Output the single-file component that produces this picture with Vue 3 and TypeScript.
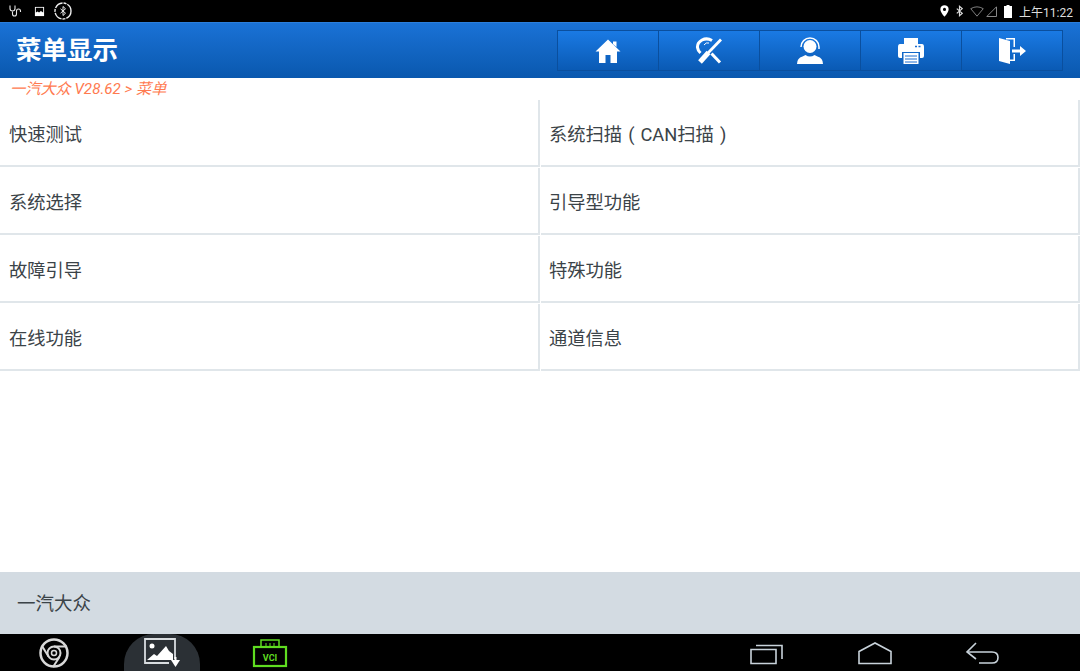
<template>
  <div class="screen">
    <div class="status-bar">
      <div class="status-left">
        <svg width="14" height="12" viewBox="0 0 14 12" fill="none" stroke="#e8e8e8" stroke-width="1.1"><path d="M1 .5v3a2.500 2.500 0 0 0 5 0v-3" /><path d="M3.500 6.500V9a2 2 0 0 0 4 0V6a2 2 0 0 1 4 0v1" /></svg>
        <svg width="11" height="11" viewBox="0 0 12 12"><path d="M1 1h10v10H1z" fill="#fff" /><path d="M2 2h8v5L7.500 5.500 5.500 7 4 6 2 7z" fill="#000" /></svg>
        <svg class="gap-circle" width="18" height="18" viewBox="0 0 18 18" fill="none" stroke="#eee"><circle cx="9" cy="9" r="8" stroke-width="1.400" stroke-dasharray="9 1 3 1" /><path d="M6.500 6.800l5 4.400L9 13.500v-9l2.500 2.300-5 4.400" stroke-width="1" /></svg>
      </div>
      <div class="status-right">
        <svg width="9" height="12" viewBox="0 0 10 13"><path fill-rule="evenodd" d="M5 0a4.600 4.600 0 0 1 4.600 4.600C9.600 8 5 13 5 13S.4 8 .4 4.600A4.600 4.600 0 0 1 5 0zm0 3a1.700 1.700 0 1 0 0 3.400A1.700 1.700 0 0 0 5 3z" fill="#fff" /></svg>
        <svg class="gap-bt" width="7" height="12" viewBox="0 0 9 12" fill="none" stroke="#ddd" stroke-width="1.500"><path d="M1 3l7 6-3.500 3V0L8 3 1 9" /></svg>
        <svg class="gap-wifi" width="14" height="11" viewBox="0 0 15 11" fill="none" stroke="#888"><path d="M.8 2.500Q7.500-1.500 14.200 2.500L7.500 10.500z" /></svg>
        <svg class="gap-signal" width="11" height="11" viewBox="0 0 11 11" fill="none" stroke="#888"><path d="M10.500.8v9.700H.8z" /></svg>
        <svg class="gap-battery" width="8" height="13" viewBox="0 0 8 13"><path d="M2.500 0h3v1H8v12H0V1h2.500z" fill="#fff" /></svg>
        <span class="clock">上午11:22</span>
      </div>
    </div>

    <header class="title-bar">
      <h1>菜单显示</h1>
      <div class="toolbar">
        <button>
          <svg width="26" height="26" viewBox="0 0 26 26"><path d="M13 1.500L25.500 13.500H22V25H15.500V17h-5v8H4V13.500H.5L13 1.500zM18 3.500h3.500V9L18 6z" fill="#fff" /></svg>
        </button>
        <button>
          <svg width="28" height="28" viewBox="0 0 28 28" fill="none" stroke="#fff"><path d="M17 3.500Q12 .5 7 3 2 6 2.500 10.500q.3 3 3 5.500" stroke-width="3" /><path d="M9 8q2-3 5-2" stroke-width="1" /><path d="M26 2.500L13 16" stroke-width="2.800" /><path d="M13.500 15.500L5 25" stroke-width="5" /><path d="M16.500 16.500l8.500 9" stroke-width="3" /></svg>
        </button>
        <button>
          <svg width="28" height="28" viewBox="0 0 28 28"><circle cx="14" cy="9.500" r="6.500" fill="#fff" /><path d="M5 10a9 9 0 0 1 18 0v2" fill="none" stroke="#fff" stroke-width="1.500" /><path d="M1 27q0-6 5.500-7.500l3-1.500q4.500 3 9 0l3 1.500Q27 21 27 27z" fill="#fff" /></svg>
        </button>
        <button>
          <svg width="28" height="28" viewBox="0 0 28 28"><path d="M7 1h14v6H7z" fill="#fff" /><path d="M3 7h22q2 0 2 3v9q0 2-2 2h-2v-6H5v6H3q-2 0-2-2v-9q0-3 2-3z" fill="#fff" /><path d="M6.500 16h15v11h-15z" fill="#fff" /><path d="M8 19h12M8 22h12M8 25h12" stroke="#1a6cd0" stroke-width="1" /><path d="M18 9.500h2M21.500 9.500h2" stroke="#1a6cd0" stroke-width="1.400" /></svg>
        </button>
        <button>
          <svg width="28" height="28" viewBox="0 0 28 28"><path d="M1 1h16v9h-1.500V2.500H8V1z" fill="#fff" /><path d="M1 1l11 3v23L1 24z" fill="#fff" /><path d="M15.500 17H17v7H12v-1.500h3.500z" fill="#fff" /><path d="M14 12.500h8V9l6 5-6 5v-3.500h-8z" fill="#fff" /></svg>
        </button>
      </div>
    </header>

    <div class="crumb">一汽大众 V28.62 &gt; 菜单</div>

    <main class="menu">
      <div v-for="item in items" :key="item" class="menu-item">{{ item }}</div>
    </main>

    <div class="brand-bar">一汽大众</div>

    <nav class="nav-bar">
      <svg class="nav-chrome" width="30" height="30" viewBox="0 0 30 30" fill="none" stroke="#d8d8d8"><circle cx="15" cy="15" r="13.500" stroke-width="2.500" /><circle cx="15" cy="15" r="6.500" stroke-width="2" /><circle cx="15" cy="15" r="2.500" stroke-width="1.500" /><path d="M15 8.500h13M9.500 18.500L3 8M20.500 19L14 29" stroke-width="2" /></svg>
      <div class="nav-pill">
        <svg width="40" height="34" viewBox="0 0 40 34" fill="none"><path d="M33 23V3H3v24h24" stroke="#d8dcdf" stroke-width="1.800" /><circle cx="10" cy="10" r="2.500" fill="#fff" /><path d="M5 24l7-6 3 2 9-10 3 5 4 3v6z" fill="#fff" /><path d="M29 24h9l-4.500 7z" fill="#fff" /><path d="M33.500 21v4" stroke="#fff" stroke-width="2" /></svg>
      </div>
      <div class="nav-vci">
        <svg width="36" height="30" viewBox="0 0 36 30" fill="none" stroke="#5fdc20"><path d="M9 9V2h18v7" stroke-width="1.500" /><path d="M14 5v4M18 5v4M22 5v4" stroke-width="1" /><rect x="2" y="9" width="32" height="19" stroke-width="2.200" /><text x="18" y="22.500" text-anchor="middle" class="vci-text">VCI</text></svg>
      </div>
      <div class="nav-spacer"></div>
      <svg class="nav-recent" width="36" height="24" viewBox="0 0 36 24" fill="none" stroke="#c8d2da" stroke-width="1.600"><path d="M2 8.500h25v14H2z" /><path d="M7 4.500h26V18" /></svg>
      <svg class="nav-home" width="36" height="24" viewBox="0 0 36 24" fill="none" stroke="#c8d2da" stroke-width="1.600"><path d="M2 10.500L18 2l16 8.500v12H2z" /></svg>
      <svg class="nav-back" width="36" height="24" viewBox="0 0 36 24" fill="none" stroke="#c8d2da" stroke-width="1.600"><path d="M11 2L2 11l9 7" /><path d="M2 11h25q6 0 6 5.500T27 22H14" /></svg>
    </nav>
  </div>
</template>

<script setup lang="ts">
const items: string[] = [
  '快速测试',
  '系统扫描 ( CAN扫描 )',
  '系统选择',
  '引导型功能',
  '故障引导',
  '特殊功能',
  '在线功能',
  '通道信息',
]
</script>

<style scoped>
.screen {
  width: 1080px;
  height: 671px;
  display: flex;
  flex-direction: column;
  overflow: hidden;
  background: #fff;
  font-family: "Roboto", "Noto Sans CJK SC", sans-serif;
}

.status-bar {
  height: 22px;
  flex: none;
  background: #000;
  display: flex;
  justify-content: space-between;
  align-items: center;
  padding: 0 7px 0 9px;
}
.status-left {
  display: flex;
  align-items: center;
  gap: 11px;
}
.gap-circle {
  margin-left: -2px;
}
.status-right {
  display: flex;
  align-items: center;
}
.gap-bt {
  margin-left: 7px;
}
.gap-wifi {
  margin-left: 7px;
}
.gap-signal {
  margin-left: 2px;
}
.gap-battery {
  margin-left: 7px;
}
.clock {
  color: #ddd;
  font-size: 12px;
  margin-left: 7px;
}

.title-bar {
  height: 56px;
  flex: none;
  box-sizing: border-box;
  border-top: 1px solid #2b7fdc;
  background: linear-gradient(#1a72d6, #0a58ae);
  display: flex;
  align-items: center;
  justify-content: space-between;
  padding: 0 17px 0 16px;
}
.title-bar h1 {
  margin: 0 0 6px;
  color: #fff;
  font-size: 25.5px;
  font-weight: 700;
}
.toolbar {
  display: flex;
  border: 1px solid #0a4f9e;
}
.toolbar button {
  width: 101px;
  height: 39px;
  padding: 0;
  border: 0;
  border-right: 1px solid #0a4f9e;
  background: linear-gradient(#1a7ae4, #0a5ab4);
  display: flex;
  align-items: center;
  justify-content: center;
}
.toolbar button:last-child {
  width: 100px;
  border-right: 0;
}

.crumb {
  height: 22px;
  flex: none;
  padding-left: 10px;
  line-height: 22px;
  color: #ff7a50;
  font-size: 15.2px;
  font-style: italic;
}

.menu {
  flex: 1;
  display: grid;
  grid-template-columns: 540px 540px;
  grid-auto-rows: 67px;
  row-gap: 1px;
  align-content: start;
}
.menu-item {
  display: flex;
  align-items: center;
  padding: 1px 0 0 9px;
  border-right: 2px solid #e0e6ea;
  border-bottom: 2px solid #e0e6ea;
  color: #3b4348;
  font-size: 18.3px;
  word-spacing: 1.5px;
}
.menu-item:nth-child(even) {
  padding-left: 8px;
  margin-left: 1px;
}

.brand-bar {
  height: 62px;
  flex: none;
  box-sizing: border-box;
  padding: 0 0 2px 17px;
  background: #d3dbe2;
  display: flex;
  align-items: center;
  color: #3b4348;
  font-size: 18.5px;
}

.nav-bar {
  height: 37px;
  flex: none;
  background: #000;
  display: flex;
  align-items: center;
  overflow: hidden;
}
.nav-chrome {
  margin-left: 39px;
  flex: none;
}
.nav-pill {
  width: 76px;
  height: 37px;
  margin-left: 55px;
  flex: none;
  border-radius: 30px 30px 0 0;
  background: #2b3035;
  display: flex;
  align-items: center;
  justify-content: center;
}
.nav-vci {
  margin-left: 52px;
  flex: none;
  display: flex;
}
.vci-text {
  fill: #5fdc20;
  stroke: none;
  font-size: 9px;
  font-weight: 700;
}
.nav-spacer {
  flex: 1;
}
.nav-home {
  margin-left: 72px;
}
.nav-back {
  margin-left: 72px;
  margin-right: 79px;
}
</style>
